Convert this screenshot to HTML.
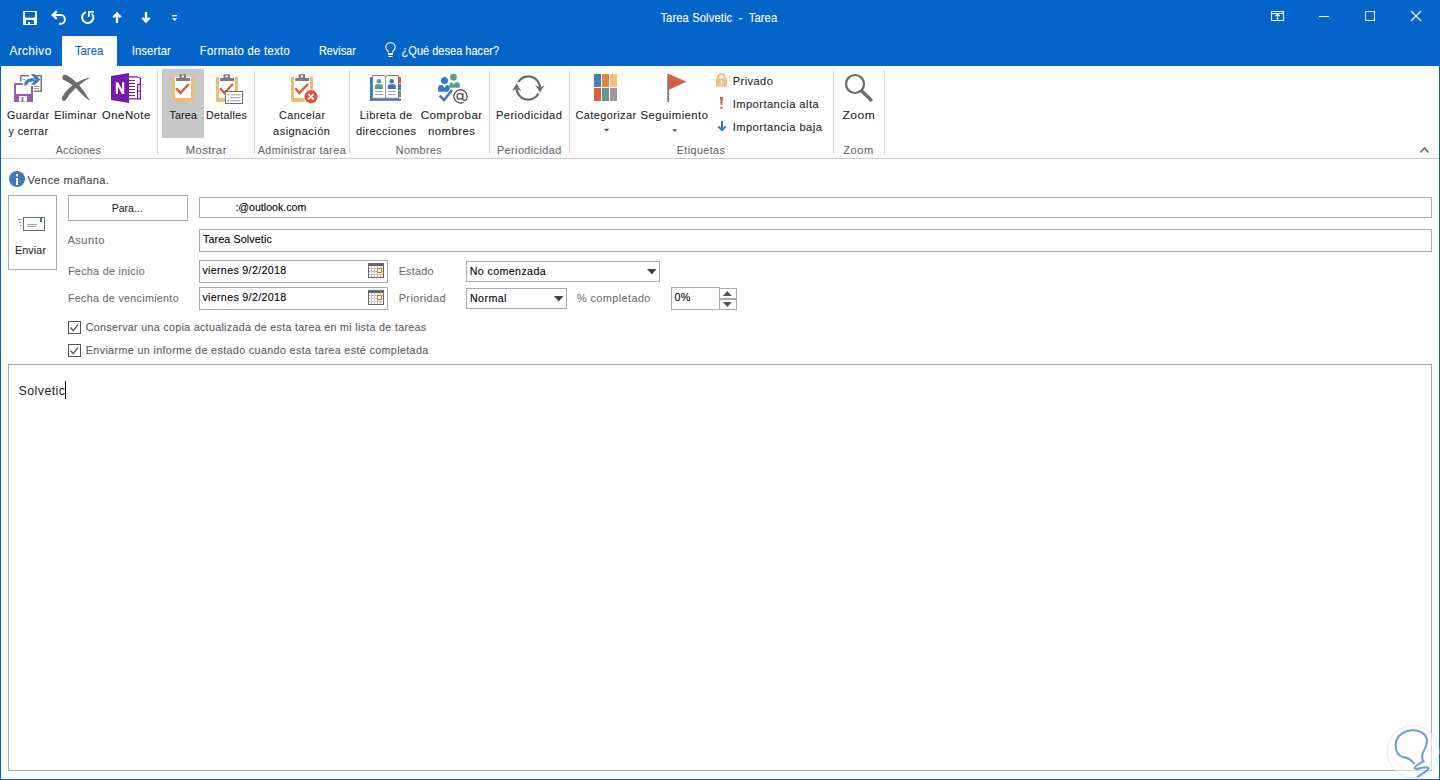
<!DOCTYPE html><html><head><meta charset="utf-8"><style>html,body{margin:0;padding:0;width:1440px;height:780px;overflow:hidden;background:#fff}svg{display:block}text{font-family:"Liberation Sans",sans-serif;white-space:pre}</style></head><body>
<svg width="1440" height="780" viewBox="0 0 1440 780">
<rect x="0" y="0" width="1440" height="780" fill="#fff"/>
<rect x="0" y="0" width="1440" height="66" fill="#0364c9"/>
<rect x="0" y="0" width="1" height="780" fill="#0364c9"/>
<rect x="1439" y="0" width="1" height="780" fill="#0364c9"/>
<rect x="0" y="779" width="1440" height="1" fill="#0364c9"/>
<text x="710.11" y="21.7" font-size="12.10" fill="#fff" stroke="#fff" stroke-width="0.1" textLength="125.59" lengthAdjust="spacing" transform="scale(0.9300 1)">Tarea Solvetic  -  Tarea</text>
<rect x="62" y="36" width="55" height="30" fill="#fff"/>
<text x="9.67" y="55.2" font-size="12.10" fill="#fff" stroke="#fff" stroke-width="0.1" textLength="42.98" lengthAdjust="spacing" transform="scale(0.9725 1)">Archivo</text>
<text x="80.54" y="55.2" font-size="12.10" fill="#0364c9" stroke="#0364c9" stroke-width="0.1" textLength="30.43" lengthAdjust="spacing" transform="scale(0.9300 1)">Tarea</text>
<text x="141.61" y="55.2" font-size="12.10" fill="#fff" stroke="#fff" stroke-width="0.1" textLength="42.04" lengthAdjust="spacing" transform="scale(0.9300 1)">Insertar</text>
<text x="214.84" y="55.2" font-size="12.10" fill="#fff" stroke="#fff" stroke-width="0.1" textLength="96.77" lengthAdjust="spacing" transform="scale(0.9300 1)">Formato de texto</text>
<text x="355.00" y="55.2" font-size="12.10" fill="#fff" stroke="#fff" stroke-width="0.1" textLength="40.95" lengthAdjust="spacing" transform="scale(0.8986 1)">Revisar</text>
<text x="439.76" y="55.2" font-size="12.10" fill="#fff" stroke="#fff" stroke-width="0.1" textLength="106.77" lengthAdjust="spacing" transform="scale(0.9132 1)">¿Qué desea hacer?</text>
<rect x="1" y="158" width="1438" height="1" fill="#cdcdcd"/>
<rect x="157" y="70" width="1" height="84" fill="#d4d4d4"/>
<rect x="254" y="70" width="1" height="84" fill="#d4d4d4"/>
<rect x="349" y="70" width="1" height="84" fill="#d4d4d4"/>
<rect x="489" y="70" width="1" height="84" fill="#d4d4d4"/>
<rect x="569" y="70" width="1" height="84" fill="#d4d4d4"/>
<rect x="833" y="70" width="1" height="84" fill="#d4d4d4"/>
<rect x="884" y="70" width="1" height="84" fill="#d4d4d4"/>
<text x="7.37" y="118.8" font-size="11.52" fill="#262626" stroke="#262626" stroke-width="0.1" textLength="44.95" lengthAdjust="spacing" transform="scale(0.9366 1)">Guardar</text>
<text x="8.90" y="134.7" font-size="11.52" fill="#262626" stroke="#262626" stroke-width="0.1" textLength="42.18" lengthAdjust="spacing" transform="scale(0.9435 1)">y cerrar</text>
<text x="57.06" y="118.8" font-size="11.52" fill="#262626" stroke="#262626" stroke-width="0.1" textLength="44.74" lengthAdjust="spacing" transform="scale(0.9499 1)">Eliminar</text>
<text x="103.57" y="118.8" font-size="11.52" fill="#262626" stroke="#262626" stroke-width="0.1" textLength="48.79" lengthAdjust="spacing" transform="scale(0.9858 1)">OneNote</text>
<rect x="162" y="69" width="42" height="69" fill="#c8c8c8"/>
<text x="182.15" y="118.8" font-size="11.52" fill="#262626" stroke="#262626" stroke-width="0.1" textLength="29.62" lengthAdjust="spacing" transform="scale(0.9300 1)">Tarea</text>
<text x="221.40" y="118.8" font-size="11.52" fill="#262626" stroke="#262626" stroke-width="0.1" textLength="44.14" lengthAdjust="spacing" transform="scale(0.9300 1)">Detalles</text>
<text x="298.78" y="118.8" font-size="11.52" fill="#262626" stroke="#262626" stroke-width="0.1" textLength="49.24" lengthAdjust="spacing" transform="scale(0.9341 1)">Cancelar</text>
<text x="284.22" y="134.7" font-size="11.52" fill="#262626" stroke="#262626" stroke-width="0.1" textLength="59.11" lengthAdjust="spacing" transform="scale(0.9609 1)">asignación</text>
<text x="379.50" y="118.8" font-size="11.52" fill="#262626" stroke="#262626" stroke-width="0.1" textLength="55.27" lengthAdjust="spacing" transform="scale(0.9481 1)">Libreta de</text>
<text x="371.59" y="134.7" font-size="11.52" fill="#262626" stroke="#262626" stroke-width="0.1" textLength="62.75" lengthAdjust="spacing" transform="scale(0.9578 1)">direcciones</text>
<text x="418.71" y="118.8" font-size="11.52" fill="#262626" stroke="#262626" stroke-width="0.1" textLength="61.21" lengthAdjust="spacing" transform="scale(1.0047 1)">Comprobar</text>
<text x="432.57" y="134.7" font-size="11.52" fill="#262626" stroke="#262626" stroke-width="0.1" textLength="47.51" lengthAdjust="spacing" transform="scale(0.9892 1)">nombres</text>
<text x="513.49" y="118.8" font-size="11.52" fill="#262626" stroke="#262626" stroke-width="0.1" textLength="68.34" lengthAdjust="spacing" transform="scale(0.9658 1)">Periodicidad</text>
<text x="605.98" y="118.8" font-size="11.52" fill="#262626" stroke="#262626" stroke-width="0.1" textLength="64.03" lengthAdjust="spacing" transform="scale(0.9495 1)">Categorizar</text>
<text x="650.29" y="118.8" font-size="11.52" fill="#262626" stroke="#262626" stroke-width="0.1" textLength="68.53" lengthAdjust="spacing" transform="scale(0.9850 1)">Seguimiento</text>
<text x="762.79" y="84.8" font-size="11.52" fill="#262626" stroke="#262626" stroke-width="0.1" textLength="41.75" lengthAdjust="spacing" transform="scale(0.9606 1)">Privado</text>
<text x="755.60" y="107.7" font-size="11.52" fill="#262626" stroke="#262626" stroke-width="0.1" textLength="88.69" lengthAdjust="spacing" transform="scale(0.9697 1)">Importancia alta</text>
<text x="754.80" y="130.6" font-size="11.52" fill="#262626" stroke="#262626" stroke-width="0.1" textLength="91.89" lengthAdjust="spacing" transform="scale(0.9707 1)">Importancia baja</text>
<text x="800.47" y="118.8" font-size="11.52" fill="#262626" stroke="#262626" stroke-width="0.1" textLength="30.79" lengthAdjust="spacing" transform="scale(1.0524 1)">Zoom</text>
<text x="59.84" y="153.7" font-size="11.52" fill="#666666" stroke="#666666" stroke-width="0.1" textLength="48.71" lengthAdjust="spacing" transform="scale(0.9300 1)">Acciones</text>
<text x="189.89" y="153.7" font-size="11.52" fill="#666666" stroke="#666666" stroke-width="0.1" textLength="41.73" lengthAdjust="spacing" transform="scale(0.9777 1)">Mostrar</text>
<text x="277.20" y="153.7" font-size="11.52" fill="#666666" stroke="#666666" stroke-width="0.1" textLength="94.41" lengthAdjust="spacing" transform="scale(0.9300 1)">Administrar tarea</text>
<text x="425.59" y="153.7" font-size="11.52" fill="#666666" stroke="#666666" stroke-width="0.1" textLength="49.35" lengthAdjust="spacing" transform="scale(0.9300 1)">Nombres</text>
<text x="528.13" y="153.7" font-size="11.52" fill="#666666" stroke="#666666" stroke-width="0.1" textLength="68.34" lengthAdjust="spacing" transform="scale(0.9409 1)">Periodicidad</text>
<text x="727.74" y="153.7" font-size="11.52" fill="#666666" stroke="#666666" stroke-width="0.1" textLength="51.61" lengthAdjust="spacing" transform="scale(0.9300 1)">Etiquetas</text>
<text x="871.35" y="153.7" font-size="11.52" fill="#666666" stroke="#666666" stroke-width="0.1" textLength="30.79" lengthAdjust="spacing" transform="scale(0.9679 1)">Zoom</text>
<path fill="#fff" fill-rule="evenodd" d="M23 11h14v14h-14z M25 12h10v4.7l-1 1h-8l-1-1z M26 20h8v4h-4v-2h-2v2h-2z"/>
<path d="M53 15H60.5A4.4 4.4 0 0 1 60.5 23.8H59" fill="none" stroke="#fff" stroke-width="2"/>
<path d="M56.8 11.2L52.6 15L56.8 18.8" fill="none" stroke="#fff" stroke-width="2.3"/>
<path d="M85.9 12.1A5.6 5.6 0 1 0 92 13.8" fill="none" stroke="#fff" stroke-width="2"/>
<path d="M88 11h6v1.8h-4.2v4.2h-1.8z" fill="#fff"/>
<path d="M117 23V13M113.3 17.3L117 13.4L120.7 17.3" fill="none" stroke="#fff" stroke-width="2.3"/>
<path d="M146 12V22M142.3 17.7L146 21.6L149.7 17.7" fill="none" stroke="#fff" stroke-width="2.3"/>
<rect x="172" y="15" width="5" height="1.3" fill="#fff"/>
<path d="M172 18h5.2l-2.6 3z" fill="#fff"/>
<path d="M1271.5 11.5h12v9h-12zM1271.5 13.5h12M1277.5 14v7M1275.3 16.2l2.2-2.2l2.2 2.2" fill="none" stroke="#fff" stroke-width="1.15"/>
<rect x="1319" y="16" width="10" height="1" fill="#fff"/>
<path d="M1365.5 11.5h9v9h-9z" fill="none" stroke="#fff" stroke-width="1"/>
<path d="M1411 11L1421 21M1421 11L1411 21" fill="none" stroke="#fff" stroke-width="1.1"/>
<path d="M388.3 52.5V51.5Q385.8 49.5 385.8 47.3A4.7 4.7 0 0 1 395.2 47.3Q395.2 49.5 392.7 51.5V52.5" fill="none" stroke="#fff" stroke-width="1.1"/>
<rect x="388" y="53" width="5" height="2" fill="#fff"/>
<rect x="388.5" y="56" width="4" height="1" fill="#fff"/>
<path fill="#7a7a7a" d="M20 75h9v1.5h-7.5v5H20z M36 75h6v17h-8v-1.5h6.5v-14H36z"/>
<rect x="23" y="79" width="2" height="1" fill="#9a9a9a"/>
<rect x="34" y="86" width="5" height="1" fill="#9a9a9a"/>
<rect x="34" y="88" width="5" height="1" fill="#9a9a9a"/>
<path fill="#9a5cb4" fill-rule="evenodd" d="M14 83h8.8v2H16v9h15v-8h2v16H14z M19 96h8v5.5h-3.7V97h-1.7v4.5H19z"/>
<path d="M25.6 85.2Q25.8 79.6 34.5 79.6" fill="none" stroke="#3b7bc0" stroke-width="3.2"/>
<path d="M31 74.2H35L40.3 79.5L35 84.8H31L35.6 79.5Z" fill="#3b7bc0"/>
<path fill="#6b6b6b" d="M62.3 77.5Q62.5 73.8 66.5 75Q79 81.5 90 100.8Q86.5 99.5 76.5 88.5Q70 82.5 63.8 80Q62.2 79.2 62.3 77.5Z"/>
<path fill="#6b6b6b" d="M61.8 98.6Q62.3 101.8 65.3 100.5Q71 91.5 78.2 86Q84 80.5 90.8 77.4Q84 78.2 76 83Q66.5 89 62.4 96.5Q61.7 97.5 61.8 98.6Z"/>
<path fill="#7719aa" d="M111 76L129 73V103L111 100Z"/>
<path fill="#fff" d="M115.8 82.2h2.3l4 7.3v-7.3h2.1V94h-2.2l-4.1-7.4V94h-2.1Z"/>
<path fill="none" stroke="#7719aa" stroke-width="1.3" d="M129 76.8H137.5L140.4 78.5V98.8H129"/>
<path fill="none" stroke="#7719aa" stroke-width="1.2" d="M129 80.5h6M129 83.5h6M129 86.5h6M129 89.5h6M129 92.5h6M129 95.5h6M137.6 84.3h2.6M137.6 91h2.6M137.6 84.3v14.5"/>
<g transform="translate(171.9,76.8)">
<rect x="0" y="0" width="22" height="25.2" rx="1.5" fill="#ebbd72"/>
<rect x="3" y="0" width="16" height="21.2" fill="#fff"/>
<path fill="#7a7a7a" d="M4.2 1.3H7.6V-1.5Q7.6 -2.6 8.6 -2.6H13.1Q14.1 -2.6 14.1 -1.5V1.3H18.1V4.2H4.2Z "/>
<rect x="9.7" y="-1.3" width="2.3" height="1.9" fill="#fff"/>
<path fill="none" stroke="#d9593a" stroke-width="2.3" d="M4.3 11.5L8.5 16.3L17 7.2"/>
</g>
<g transform="translate(215.9,76.8)">
<rect x="0" y="0" width="22" height="25.2" rx="1.5" fill="#ebbd72"/>
<rect x="3" y="0" width="16" height="21.2" fill="#fff"/>
<path fill="#7a7a7a" d="M4.2 1.3H7.6V-1.5Q7.6 -2.6 8.6 -2.6H13.1Q14.1 -2.6 14.1 -1.5V1.3H18.1V4.2H4.2Z "/>
<rect x="9.7" y="-1.3" width="2.3" height="1.9" fill="#fff"/>
<path fill="none" stroke="#d9593a" stroke-width="2.3" d="M4.3 11.5L8.5 16.3L17 7.2"/>
</g>
<rect x="225.5" y="91.5" width="17" height="12" fill="#fff" stroke="#6e6e6e" stroke-width="1"/>
<rect x="227.5" y="94" width="1.5" height="1.5" fill="#8a8a8a"/>
<rect x="227.5" y="100" width="1.5" height="1.5" fill="#8a8a8a"/>
<rect x="230.5" y="94.3" width="10" height="1" fill="#9a9a9a"/>
<rect x="230.5" y="97.2" width="10" height="1" fill="#9a9a9a"/>
<rect x="230.5" y="100.2" width="10" height="1" fill="#9a9a9a"/>
<g transform="translate(291,76.8)">
<rect x="0" y="0" width="22" height="25.2" rx="1.5" fill="#ebbd72"/>
<rect x="3" y="0" width="16" height="21.2" fill="#fff"/>
<path fill="#7a7a7a" d="M4.2 1.3H7.6V-1.5Q7.6 -2.6 8.6 -2.6H13.1Q14.1 -2.6 14.1 -1.5V1.3H18.1V4.2H4.2Z "/>
<rect x="9.7" y="-1.3" width="2.3" height="1.9" fill="#fff"/>
<path fill="none" stroke="#d9593a" stroke-width="2.3" d="M4.3 11.5L8.5 16.3L17 7.2"/>
</g>
<circle cx="311" cy="96.7" r="7.2" fill="#fff"/>
<circle cx="311" cy="96.7" r="6.6" fill="#d9593a"/>
<path d="M308.3 94L313.7 99.4M313.7 94L308.3 99.4" stroke="#fff" stroke-width="1.6" fill="none"/>
<rect x="370" y="77" width="2.2" height="24" fill="#3b78bd"/>
<rect x="370" y="98.5" width="31" height="2.3" fill="#3b78bd"/>
<rect x="398.8" y="77" width="2.2" height="6.2" fill="#d9593a"/>
<rect x="398.8" y="84" width="2.2" height="6.2" fill="#3b78bd"/>
<rect x="398.8" y="91" width="2.2" height="6.2" fill="#5b9a8e"/>
<path d="M372.6 75.5H384Q385.2 75.8 385.6 77Q386 75.8 387.2 75.5H398.5V98.3H372.6Z" fill="#fff" stroke="#7a7a7a" stroke-width="1"/>
<rect x="385.2" y="77" width="0.9" height="21.5" fill="#8a8a8a"/>
<circle cx="378.9" cy="81.3" r="2.3" fill="#5b9a8e"/>
<path d="M374.9 89V86.3Q374.9 84.2 376.9 84.2H380.9Q382.9 84.2 382.9 86.3V89Z" fill="#5b9a8e"/>
<rect x="375.09999999999997" y="91" width="7.6" height="1" fill="#a0a0a0"/>
<rect x="375.09999999999997" y="94" width="7.6" height="1" fill="#a0a0a0"/>
<circle cx="391.8" cy="81.3" r="2.3" fill="#3b78bd"/>
<path d="M387.8 89V86.3Q387.8 84.2 389.8 84.2H393.8Q395.8 84.2 395.8 86.3V89Z" fill="#3b78bd"/>
<rect x="388.0" y="91" width="7.6" height="1" fill="#a0a0a0"/>
<rect x="388.0" y="94" width="7.6" height="1" fill="#a0a0a0"/>
<circle cx="444.5" cy="80.4" r="3.5" fill="#3b78bd"/>
<path d="M438.2 91.7V87.5Q438.2 85 440.7 85H442.5L444.5 88L446.5 85H447.5Q449.8 85 449.8 87.5V91.7Z" fill="#3b78bd"/>
<circle cx="453.4" cy="77.2" r="3.4" fill="#5b9a8e"/>
<path d="M449.6 87.8V84.5Q449.6 82.2 451.6 82.2H451.8L453.6 84.8L455.4 82.2H457.6Q459.8 82.2 459.8 84.5V87.8Z" fill="#5b9a8e"/>
<path d="M439.7 95.6L444 100L452 90" fill="none" stroke="#fff" stroke-width="4.2"/>
<path d="M439.7 95.6L444 100L452 90" fill="none" stroke="#3b78bd" stroke-width="2.5"/>
<circle cx="459.9" cy="96.4" r="2.8" fill="none" stroke="#555" stroke-width="1.3"/>
<path d="M462.8 93.2V98.4Q462.8 100.3 464.7 100.3Q467.1 100.3 467.1 96.2A6.6 6.6 0 1 0 463.6 102.2" fill="none" stroke="#555" stroke-width="1.3"/>
<path d="M518.3 82A11.7 11.7 0 0 1 540 88.6M538.6 93.5A11.7 11.7 0 0 1 516.6 87.4" fill="none" stroke="#6b6b6b" stroke-width="2.3"/>
<path d="M535.4 85L540 92.6L544.6 85L540 87.8Z M512 91.2L516.6 83.6L521.2 91.2L516.6 88.4Z" fill="#6b6b6b"/>
<rect x="594" y="74" width="7" height="13" fill="#4a7eba"/>
<rect x="602" y="74" width="7" height="13" fill="#e08b3c"/>
<rect x="610" y="74" width="7" height="13" fill="#efc27b"/>
<rect x="594" y="88" width="7" height="13" fill="#d9603f"/>
<rect x="602" y="88" width="7" height="13" fill="#5e9996"/>
<rect x="610" y="88" width="7" height="13" fill="#999999"/>
<path d="M603.8 128.8h5.5l-2.75 2.9z M672.2 129.2h5.2l-2.6 2.7z" fill="#555"/>
<rect x="667.3" y="74" width="1.8" height="28" fill="#777"/>
<path d="M669 74L686.5 81.8L669 89.8Z" fill="#d9603f"/>
<path d="M718.3 79V77A3.2 3.2 0 0 1 724.7 77V79" fill="none" stroke="#efc27b" stroke-width="1.8"/>
<path d="M716 78.3H727V86.8H716Z M720.8 80.2h1.4v1.7l-0.3 0.5v3h-0.8v-3l-0.3-0.5z" fill="#efc27b" fill-rule="evenodd"/>
<path d="M720 97H723L722.3 105H720.7Z" fill="#d9593a"/>
<rect x="720.3" y="106.8" width="2.4" height="1.9" fill="#d9593a"/>
<path d="M722 121V130M718.3 126.5L722 130.2L725.7 126.5" fill="none" stroke="#3b78bd" stroke-width="2"/>
<circle cx="855" cy="84" r="9" fill="none" stroke="#6b6b6b" stroke-width="2.2"/>
<path d="M861.8 91L871 100" stroke="#6b6b6b" stroke-width="3.2" stroke-linecap="round"/>
<path d="M1420.5 152.5L1424.5 148L1428.5 152.5" fill="none" stroke="#666" stroke-width="1.6"/>
<text x="28.70" y="184.2" font-size="11.52" fill="#444" stroke="#444" stroke-width="0.1" textLength="85.43" lengthAdjust="spacing" transform="scale(0.9546 1)">Vence mañana.</text>
<circle cx="17" cy="179" r="8" fill="#4279b8"/>
<rect x="16" y="178" width="2" height="7" fill="#fff"/>
<rect x="16" y="174" width="2" height="2.4" fill="#fff"/>
<rect x="8" y="195" width="49" height="75" fill="#ababab"/>
<rect x="9" y="196" width="47" height="73" fill="#fff"/>
<text x="16.13" y="253.8" font-size="11.52" fill="#262626" stroke="#262626" stroke-width="0.1" textLength="33.33" lengthAdjust="spacing" transform="scale(0.9300 1)">Enviar</text>
<rect x="68" y="195" width="120" height="26" fill="#ababab"/>
<rect x="69" y="196" width="118" height="24" fill="#fff"/>
<text x="122.79" y="212.0" font-size="11.52" fill="#262626" stroke="#262626" stroke-width="0.1" textLength="33.94" lengthAdjust="spacing" transform="scale(0.9105 1)">Para...</text>
<rect x="199" y="197" width="1233" height="21" fill="#ababab"/>
<rect x="200" y="198" width="1231" height="19" fill="#fff"/>
<text x="255.96" y="211.3" font-size="11.52" fill="#000" stroke="#000" stroke-width="0.1" textLength="76.98" lengthAdjust="spacing" transform="scale(0.9197 1)">:@outlook.com</text>
<text x="69.42" y="243.8" font-size="11.52" fill="#6d6d6d" stroke="#6d6d6d" stroke-width="0.1" textLength="38.11" lengthAdjust="spacing" transform="scale(0.9709 1)">Asunto</text>
<rect x="199" y="229" width="1233" height="23" fill="#ababab"/>
<rect x="200" y="230" width="1231" height="21" fill="#fff"/>
<text x="218.17" y="243.3" font-size="11.52" fill="#000" stroke="#000" stroke-width="0.1" textLength="74.09" lengthAdjust="spacing" transform="scale(0.9300 1)">Tarea Solvetic</text>
<text x="73.12" y="275.0" font-size="11.52" fill="#6d6d6d" stroke="#6d6d6d" stroke-width="0.1" textLength="82.37" lengthAdjust="spacing" transform="scale(0.9300 1)">Fecha de inicio</text>
<text x="73.12" y="301.8" font-size="11.52" fill="#6d6d6d" stroke="#6d6d6d" stroke-width="0.1" textLength="118.92" lengthAdjust="spacing" transform="scale(0.9300 1)">Fecha de vencimiento</text>
<rect x="199" y="260" width="189" height="23" fill="#ababab"/>
<rect x="200" y="261" width="187" height="21" fill="#fff"/>
<rect x="199" y="287" width="189" height="23" fill="#ababab"/>
<rect x="200" y="288" width="187" height="21" fill="#fff"/>
<text x="217.63" y="273.7" font-size="11.52" fill="#000" stroke="#000" stroke-width="0.1" textLength="90.11" lengthAdjust="spacing" transform="scale(0.9300 1)">viernes 9/2/2018</text>
<text x="217.63" y="300.7" font-size="11.52" fill="#000" stroke="#000" stroke-width="0.1" textLength="90.11" lengthAdjust="spacing" transform="scale(0.9300 1)">viernes 9/2/2018</text>
<text x="428.71" y="275.0" font-size="11.52" fill="#6d6d6d" stroke="#6d6d6d" stroke-width="0.1" textLength="37.31" lengthAdjust="spacing" transform="scale(0.9300 1)">Estado</text>
<text x="422.45" y="302.2" font-size="11.52" fill="#6d6d6d" stroke="#6d6d6d" stroke-width="0.1" textLength="49.69" lengthAdjust="spacing" transform="scale(0.9438 1)">Prioridad</text>
<rect x="466" y="261" width="194" height="21" fill="#ababab"/>
<rect x="467" y="262" width="192" height="19" fill="#fff"/>
<text x="505.05" y="275.0" font-size="11.52" fill="#000" stroke="#000" stroke-width="0.1" textLength="81.72" lengthAdjust="spacing" transform="scale(0.9300 1)">No comenzada</text>
<rect x="466" y="288" width="101" height="21" fill="#ababab"/>
<rect x="467" y="289" width="99" height="19" fill="#fff"/>
<text x="505.27" y="302.2" font-size="11.52" fill="#000" stroke="#000" stroke-width="0.1" textLength="39.35" lengthAdjust="spacing" transform="scale(0.9300 1)">Normal</text>
<text x="612.64" y="302.2" font-size="11.52" fill="#6d6d6d" stroke="#6d6d6d" stroke-width="0.1" textLength="77.93" lengthAdjust="spacing" transform="scale(0.9418 1)">% completado</text>
<path d="M647 269h9.5l-4.75 5.5z" fill="#444"/>
<path d="M554 296h9.5l-4.75 5.5z" fill="#444"/>
<rect x="671" y="287" width="49" height="23" fill="#ababab"/>
<rect x="672" y="288" width="47" height="21" fill="#fff"/>
<text x="725.16" y="301.0" font-size="11.52" fill="#000" stroke="#000" stroke-width="0.1" textLength="16.99" lengthAdjust="spacing" transform="scale(0.9300 1)">0%</text>
<rect x="719" y="288" width="18" height="11" fill="#ababab"/>
<rect x="720" y="289" width="16" height="9" fill="#fff"/>
<rect x="719" y="299" width="18" height="11" fill="#ababab"/>
<rect x="720" y="300" width="16" height="9" fill="#fff"/>
<path d="M722.8 296h9l-4.5-5z" fill="#555"/>
<path d="M722.8 302h9l-4.5 5z" fill="#555"/>
<rect x="68" y="321" width="13" height="13" fill="#555"/>
<rect x="69" y="322" width="11" height="11" fill="#fff"/>
<path d="M70.5 327.5l2.8 3.2l4.8-6.4" fill="none" stroke="#555" stroke-width="1.2"/>
<text x="92.26" y="330.6" font-size="11.52" fill="#5a5a5a" stroke="#5a5a5a" stroke-width="0.1" textLength="366.02" lengthAdjust="spacing" transform="scale(0.9300 1)">Conservar una copia actualizada de esta tarea en mi lista de tareas</text>
<rect x="68" y="344" width="13" height="13" fill="#555"/>
<rect x="69" y="345" width="11" height="11" fill="#fff"/>
<path d="M70.5 350.5l2.8 3.2l4.8-6.4" fill="none" stroke="#555" stroke-width="1.2"/>
<text x="92.26" y="353.6" font-size="11.52" fill="#5a5a5a" stroke="#5a5a5a" stroke-width="0.1" textLength="368.17" lengthAdjust="spacing" transform="scale(0.9300 1)">Enviarme un informe de estado cuando esta tarea esté completada</text>
<rect x="23.5" y="217.5" width="21" height="13" fill="#fff" stroke="#6b6b6b" stroke-width="1"/>
<rect x="40" y="218" width="2" height="4" fill="#3b78bd"/>
<rect x="27" y="224" width="10" height="1" fill="#a0a0a0"/>
<rect x="27" y="226" width="9" height="1" fill="#a0a0a0"/>
<rect x="18" y="219" width="3.5" height="1" fill="#8a8a8a"/>
<rect x="19" y="222" width="2.5" height="1" fill="#8a8a8a"/>
<rect x="20" y="225" width="1.5" height="1" fill="#8a8a8a"/>
<rect x="368" y="263" width="16" height="15" fill="#676767"/>
<rect x="369" y="266" width="14" height="11" fill="#c4c4c4"/>
<rect x="369" y="266" width="2" height="2" fill="#fff"/>
<rect x="369" y="269" width="2" height="2" fill="#fff"/>
<rect x="369" y="272" width="2" height="2" fill="#fff"/>
<rect x="369" y="275" width="2" height="2" fill="#fff"/>
<rect x="372" y="266" width="2" height="2" fill="#fff"/>
<rect x="372" y="269" width="2" height="2" fill="#fff"/>
<rect x="372" y="272" width="2" height="2" fill="#fff"/>
<rect x="372" y="275" width="2" height="2" fill="#fff"/>
<rect x="375" y="266" width="2" height="2" fill="#fff"/>
<rect x="375" y="269" width="2" height="2" fill="#fff"/>
<rect x="375" y="272" width="2" height="2" fill="#fff"/>
<rect x="375" y="275" width="2" height="2" fill="#fff"/>
<rect x="378" y="266" width="2" height="2" fill="#fff"/>
<rect x="378" y="269" width="2" height="2" fill="#fff"/>
<rect x="378" y="272" width="2" height="2" fill="#fff"/>
<rect x="378" y="275" width="2" height="2" fill="#fff"/>
<rect x="381" y="266" width="2" height="2" fill="#fff"/>
<rect x="381" y="269" width="2" height="2" fill="#fff"/>
<rect x="381" y="272" width="2" height="2" fill="#fff"/>
<rect x="381" y="275" width="2" height="2" fill="#fff"/>
<rect x="377" y="268" width="5" height="5" fill="#e8700f"/>
<rect x="378" y="269" width="3" height="3" fill="#fff"/>
<rect x="368" y="290" width="16" height="15" fill="#676767"/>
<rect x="369" y="293" width="14" height="11" fill="#c4c4c4"/>
<rect x="369" y="293" width="2" height="2" fill="#fff"/>
<rect x="369" y="296" width="2" height="2" fill="#fff"/>
<rect x="369" y="299" width="2" height="2" fill="#fff"/>
<rect x="369" y="302" width="2" height="2" fill="#fff"/>
<rect x="372" y="293" width="2" height="2" fill="#fff"/>
<rect x="372" y="296" width="2" height="2" fill="#fff"/>
<rect x="372" y="299" width="2" height="2" fill="#fff"/>
<rect x="372" y="302" width="2" height="2" fill="#fff"/>
<rect x="375" y="293" width="2" height="2" fill="#fff"/>
<rect x="375" y="296" width="2" height="2" fill="#fff"/>
<rect x="375" y="299" width="2" height="2" fill="#fff"/>
<rect x="375" y="302" width="2" height="2" fill="#fff"/>
<rect x="378" y="293" width="2" height="2" fill="#fff"/>
<rect x="378" y="296" width="2" height="2" fill="#fff"/>
<rect x="378" y="299" width="2" height="2" fill="#fff"/>
<rect x="378" y="302" width="2" height="2" fill="#fff"/>
<rect x="381" y="293" width="2" height="2" fill="#fff"/>
<rect x="381" y="296" width="2" height="2" fill="#fff"/>
<rect x="381" y="299" width="2" height="2" fill="#fff"/>
<rect x="381" y="302" width="2" height="2" fill="#fff"/>
<rect x="377" y="295" width="5" height="5" fill="#e8700f"/>
<rect x="378" y="296" width="3" height="3" fill="#fff"/>
<rect x="8" y="364" width="1424" height="407" fill="#a3a9b2"/>
<rect x="9" y="365" width="1422" height="405" fill="#fff"/>
<text x="19.45" y="394.7" font-size="12.96" fill="#222" textLength="48.51" lengthAdjust="spacing" transform="scale(0.9565 1)">Solvetic</text>
<rect x="65" y="381" width="1" height="18" fill="#000"/>
<circle cx="1413" cy="751.7" r="26" fill="#fff" fill-opacity="0.55" stroke="#dce6f2" stroke-width="0.9"/>
<path d="M1414 763.3C1411 759.5 1407 757.5 1402.8 756.9C1397.5 755.5 1395.5 750 1395.8 744.3C1396 736 1404 730.2 1413.3 730.2C1421 730.2 1427 735 1427 741.3C1427 746 1423.8 750 1422.6 754C1421.8 757 1422 760 1423.7 761.4C1419.5 763.5 1414 766.5 1414.7 768.6C1415.5 770 1421 767.5 1426 767.3C1430 767.3 1428.5 770 1425 772C1422.5 773.5 1420 775.5 1417.7 776.6" fill="none" stroke="#6f9fd8" stroke-width="2.1" stroke-linecap="round" stroke-linejoin="round"/>
</svg></body></html>
